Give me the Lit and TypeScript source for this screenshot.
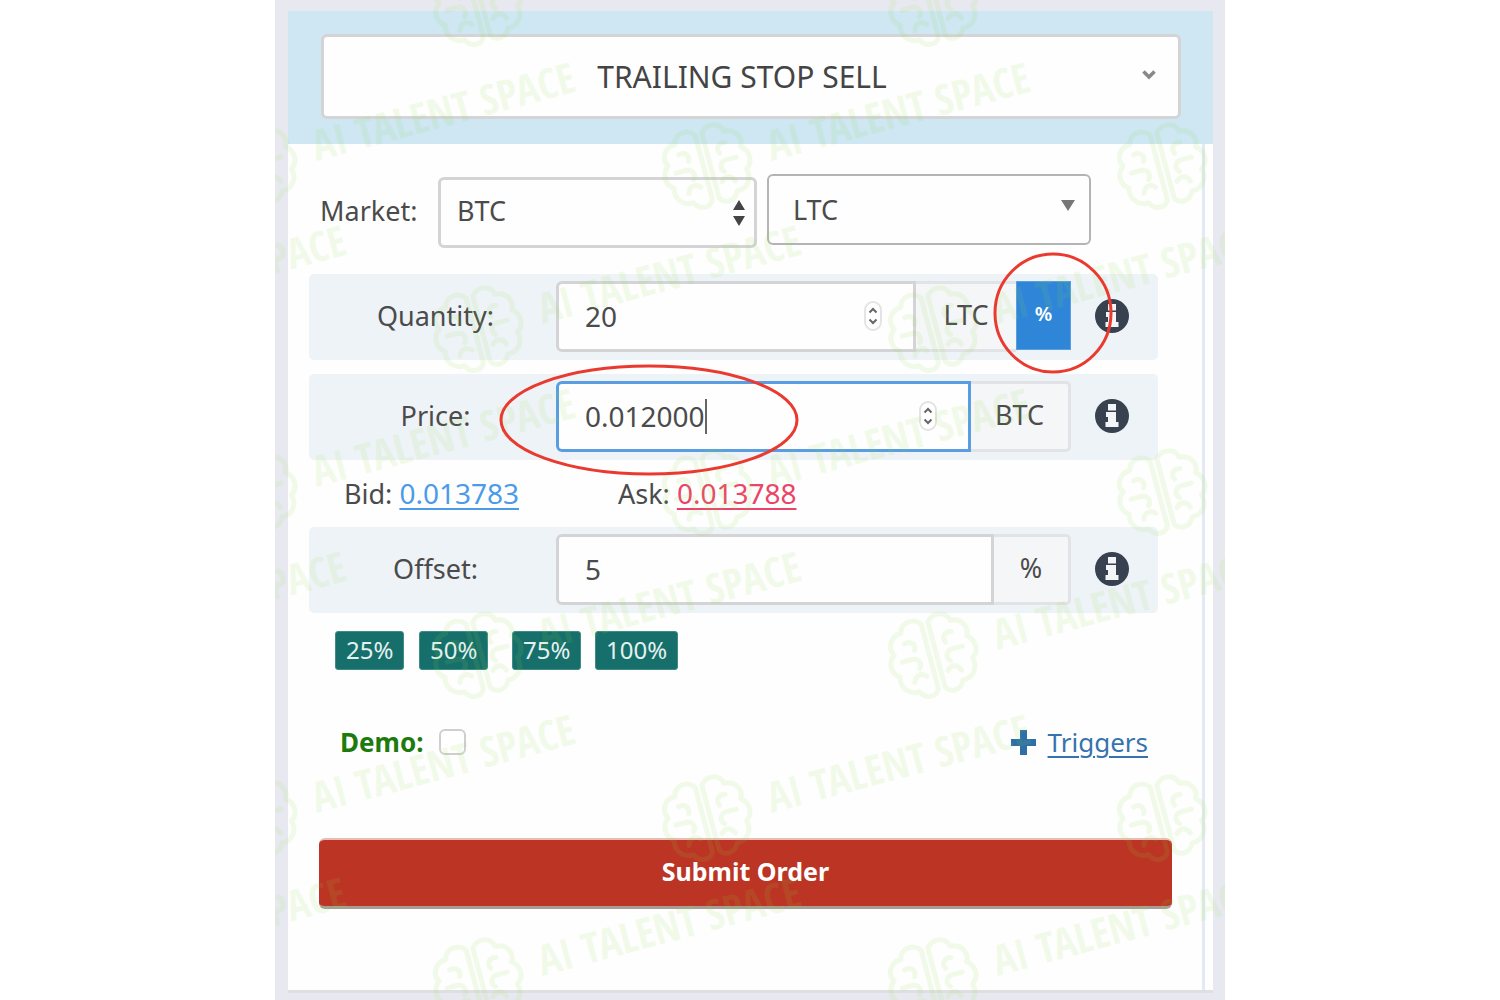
import { LitElement, html, svg, css, nothing } from "lit";
import { customElement, state } from "lit/decorators.js";

const marks: { x: number; y: number; word: boolean }[] = [];
for (let row = 0; row < 7; row++) {
  const start = row % 2 === 0 ? -252 : -23;
  for (let x = start; x < 950; x += 455) marks.push({ x, y: 5 + row * 163, word: row > 0 && x < 860 });
}

@customElement("info-icon")
class InfoIcon extends LitElement {
  static styles = css`
    :host { display: block; width: 34px; height: 34px; }
    .icon { display: block; width: 100%; height: 100%; }
  `;
  render() {
    return html`<svg class="icon" viewBox="0 0 34 34" role="img" aria-label="Info">
      <circle cx="17" cy="17" r="17" fill="#38414f" />
      <path d="M13 5h8v6.500h-8zM11 13h10v10h2.500v5h-13v-5H13v-5h-2z" fill="#f3f5f8" />
    </svg>`;
  }
}

@customElement("spin-arrows")
class SpinArrows extends LitElement {
  static styles = css`
    :host { display: block; width: 18px; height: 30px; }
    .icon { display: block; width: 100%; height: 100%; }
  `;
  render() {
    return html`<svg class="icon" viewBox="0 0 18 30" aria-hidden="true">
      <rect x="1" y="1" width="16" height="28" rx="8" fill="#fff" stroke="#e4e4e4" stroke-width="2" />
      <path d="M5.500 11.500L9 8l3.500 3.500M5.500 18.500L9 22l3.500-3.500" fill="none" stroke="#666" stroke-width="2" />
    </svg>`;
  }
}

@customElement("water-mark")
class WaterMark extends LitElement {
  static styles = css`
    :host { position: absolute; inset: 0; overflow: hidden; pointer-events: none; }
    .sheet { display: block; width: 950px; height: 1000px; opacity: 0.1; }
    .word { font: 700 42px "Open Sans Condensed", "Liberation Sans Narrow", sans-serif; fill: #8be03c; }
    .brain { fill: none; stroke: #8be03c; stroke-width: 5; stroke-linecap: round; stroke-linejoin: round; }
  `;
  render() {
    return html`<svg class="sheet" viewBox="0 0 950 1000" aria-hidden="true">
      ${marks.map(({ x, y, word }) => svg`<g transform="translate(${x} ${y}) rotate(-15)">
        <g class="brain">
          <path d="M-3-35c-7-9-20-6-22 4c-11 0-17 11-12 19c-8 6-8 18 0 23c-3 11 5 20 15 19c4 9 15 10 19 2z" />
          <path d="M4-35c7-9 20-6 22 4c11 0 17 11 12 19c8 6 8 18 0 23c3 11-5 20-15 19c-4 9-15 10-19 2z" />
          <path d="M-24-20c6-2 11 3 8 9M-31-3h10c7 0 9 7 5 11M-24 20c2-7 9-8 13-3M24-20c-6-2-11 3-8 9M31-3H21c-7 0-9 7-5 11M24 20c-2-7-9-8-13-3" />
        </g>
        ${word ? svg`<text class="word" x="64" y="10">AI TALENT SPACE</text>` : nothing}
      </g>`)}
    </svg>`;
  }
}

@customElement("app-root")
class AppRoot extends LitElement {
  @state() private demo = false;

  static styles = css`
    :host { display: block; background: #fff; color: #4b4b4b; font-family: "Noto Sans", "Open Sans", sans-serif; font-size: 27px; line-height: 36px; }
    *, *::before, *::after { box-sizing: border-box; }
    .page { position: relative; max-width: 950px; min-height: 100vh; margin: 0 auto; padding: 11px 12px 7px 13px; background: #e8e9f0; display: flex; flex-direction: column; }
    .card { flex: 1; display: flex; flex-direction: column; background: #fefefe; border-bottom: 3px solid #dfdfe1; }
    .head { background: #cfe6f3; padding: 23px 32px 25px 33px; }
    .pick { display: grid; }
    .pick > * { grid-area: 1 / 1; }
    .glyph { justify-self: end; align-self: center; pointer-events: none; display: block; }
    .select, .input { appearance: none; font: inherit; color: inherit; background: #fefefe; border: 3px solid #d4d4d6; border-radius: 6px; width: 100%; min-width: 0; height: 71px; margin: 0; outline: none; }
    .select.type { height: 85px; text-align: center; text-align-last: center; padding: 0 18px 0 0; color: #444; font-size: 30px; }
    .glyph.type { margin: 0 24px 4px 0; }
    .body { flex: 1; display: flex; flex-direction: column; margin-right: 8px; border-right: 3px solid #e3eaf4; padding: 30px 44px 0 21px; }
    .market { display: grid; grid-template-columns: 108px 319fr 324fr; column-gap: 10px; height: 74px; padding: 0 67px 0 11px; margin-bottom: 26px; align-items: start; }
    .market .label { align-self: center; }
    .base { align-self: end; }
    .base .select { padding: 0 16px 3px; }
    .coin .select { padding: 0 24px; border: 2px solid #b4b4b6; }
    .glyph.base-arrows { margin-right: 11px; }
    .glyph.coin-arrow { margin: 0 15px 10px 0; }
    .band { display: grid; grid-template-columns: 247px 1fr 87px; align-items: center; height: 86px; padding-bottom: 2px; border-radius: 5px; background: #eef3f7; }
    .band + .band { margin-top: 14px; }
    .band .label { text-align: center; padding-left: 6px; }
    .band info-icon { margin-left: 24px; }
    .group { position: relative; display: flex; height: 71px; }
    .field { position: relative; flex: 1; display: grid; min-width: 0; }
    .field > * { grid-area: 1 / 1; }
    .input { padding: 0 26px; font-size: 28px; border-radius: 6px 0 0 6px; appearance: textfield; -moz-appearance: textfield; }
    .input::-webkit-inner-spin-button, .input::-webkit-outer-spin-button { appearance: none; margin: 0; }
    .input.active { border-color: #5a9de0; }
    spin-arrows { justify-self: end; align-self: center; margin-right: 34px; }
    .caret { position: absolute; left: 149px; top: 18px; width: 2px; height: 35px; background: #666; }
    .addon { display: flex; align-items: center; justify-content: center; padding-bottom: 3px; background: #f5f6f8; border: 3px solid #e2e3e6; border-left: 0; border-radius: 0 5px 5px 0; width: 100px; }
    .addon.coin-unit { border-right: 0; border-radius: 0; }
    .addon.slim { width: 77px; }
    .percent { width: 55px; height: 69px; padding: 0 0 3px; border: 1px solid #5a9de0; background: #2f86d8; color: #fff; font: inherit; font-size: 20px; font-weight: 600; }
    .ring { position: absolute; overflow: visible; pointer-events: none; z-index: 1; fill: none; stroke: #ea3a30; stroke-width: 3; }
    .ring.round { right: -42px; top: -29px; width: 120px; height: 122px; }
    .ring.oval { left: -57px; top: -17px; width: 300px; height: 112px; }
    .quotes { display: grid; grid-template-columns: 274px 1fr; padding-left: 35px; height: 67px; align-items: center; }
    .link { color: #4c9be8; text-decoration: underline; text-underline-offset: 4px; text-decoration-thickness: 2px; }
    .quotes .link { font-size: 28px; }
    .link.ask { color: #ec4468; }
    .link.more { color: #3673ae; font-size: 26px; }
    .steps { display: grid; grid-template-columns: 84px 93px 83px 83px; justify-items: start; padding-left: 26px; margin-top: 18px; }
    .step { height: 39px; border: 1px solid #3f8b85; border-radius: 3px; background: #176f6b; color: #e4f2ef; font: inherit; font-size: 24px; line-height: 34px; padding: 0 10px 2px; }
    .extras { display: flex; align-items: center; justify-content: space-between; margin-top: 54px; padding: 0 10px 0 31px; }
    .demo { display: flex; align-items: center; gap: 16px; color: #1d7a0c; font-weight: 700; font-size: 26px; }
    .check { appearance: none; width: 27px; height: 26px; margin: 0; border: 2px solid #cfcfcf; border-radius: 6px; background: #fff; }
    .check:checked { background: #2f86d8; }
    .triggers { display: flex; align-items: center; gap: 11px; }
    .submit { height: 71px; margin: 78px -14px 0 10px; border: 0; border-top: 2px solid #e9bcb5; border-bottom: 3px solid #a79d94; border-radius: 6px; background: #bb3424; color: #fff; font: inherit; font-weight: 700; font-size: 25px; padding: 0 0 4px; }
  `;

  render() {
    return html`<main class="page">
      <form class="card" @submit=${(e: Event) => e.preventDefault()}>
        <div class="head">
          <div class="pick">
            <select class="select type" aria-label="Order type"><option>TRAILING STOP SELL</option></select>
            <svg class="glyph type" width="16" height="10" viewBox="0 0 16 10" aria-hidden="true"><path d="M2.500 1.500L8 7l5.500-5.500" fill="none" stroke="#888" stroke-width="3.500" /></svg>
          </div>
        </div>
        <div class="body">
          <div class="market">
            <label class="label" for="base">Market:</label>
            <div class="pick base">
              <select class="select" id="base"><option>BTC</option></select>
              <svg class="glyph base-arrows" width="14" height="28" viewBox="0 0 14 28" aria-hidden="true"><path d="M7 1l6 10H1zM7 27l6-10H1z" fill="#444" /></svg>
            </div>
            <div class="pick coin">
              <select class="select" aria-label="Coin"><option>LTC</option></select>
              <svg class="glyph coin-arrow" width="16" height="12" viewBox="0 0 16 12" aria-hidden="true"><path d="M1 1h14L8 12z" fill="#777" /></svg>
            </div>
          </div>
          <div class="band">
            <label class="label" for="quantity">Quantity:</label>
            <div class="group">
              <div class="field"><input class="input" id="quantity" type="number" value="20" /><spin-arrows></spin-arrows></div>
              <span class="addon coin-unit">LTC</span>
              <button class="percent" type="button">%</button>
              <svg class="ring round" viewBox="0 0 120 122" aria-hidden="true"><ellipse cx="60" cy="61" rx="58" ry="59" /></svg>
            </div>
            <info-icon></info-icon>
          </div>
          <div class="band">
            <label class="label" for="price">Price:</label>
            <div class="group">
              <div class="field"><input class="input active" id="price" type="number" step="any" value="0.012000" /><spin-arrows></spin-arrows><span class="caret"></span></div>
              <span class="addon">BTC</span>
              <svg class="ring oval" viewBox="0 0 300 112" aria-hidden="true"><ellipse cx="150" cy="56" rx="148" ry="54" /></svg>
            </div>
            <info-icon></info-icon>
          </div>
          <div class="quotes">
            <span>Bid: <a class="link" href="#bid">0.013783</a></span>
            <span>Ask: <a class="link ask" href="#ask">0.013788</a></span>
          </div>
          <div class="band">
            <label class="label" for="offset">Offset:</label>
            <div class="group">
              <div class="field"><input class="input" id="offset" type="text" value="5" /></div>
              <span class="addon slim">%</span>
            </div>
            <info-icon></info-icon>
          </div>
          <div class="steps">
            ${[25, 50, 75, 100].map((n) => html`<button class="step" type="button">${n}%</button>`)}
          </div>
          <div class="extras">
            <label class="demo">Demo:
              <input class="check" type="checkbox" .checked=${this.demo} @change=${() => (this.demo = !this.demo)} />
            </label>
            <span class="triggers">
              <svg width="27" height="27" viewBox="0 0 27 27" aria-hidden="true"><path d="M10 1h7v9h9v7h-9v9h-7v-9H1v-7h9z" fill="#2f6fa8" /></svg>
              <a class="link more" href="#triggers">Triggers</a>
            </span>
          </div>
          <button class="submit" type="submit">Submit Order</button>
        </div>
      </form>
      <water-mark></water-mark>
    </main>`;
  }
}
